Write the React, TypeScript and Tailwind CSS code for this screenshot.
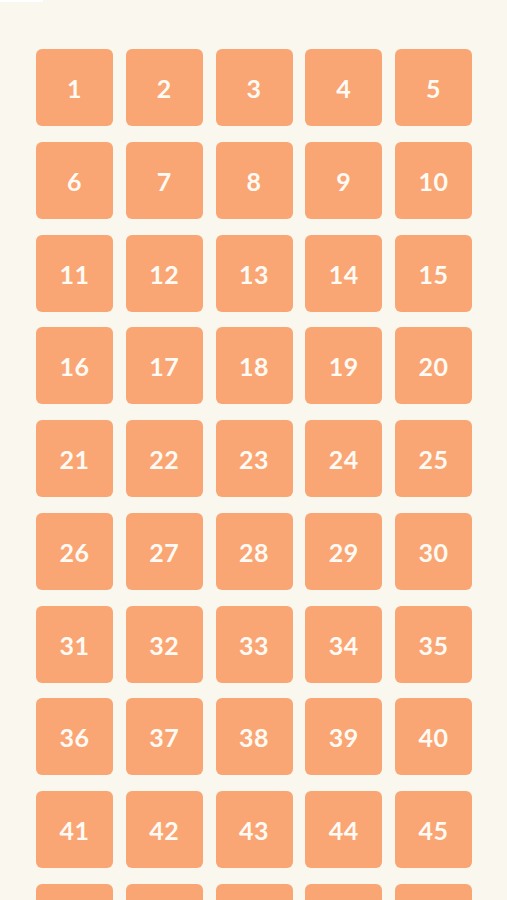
const levels = Array.from({ length: 50 }, (_, i) => i + 1);

const LevelTile = ({ n }: { n: number }) => (
  <button className="flex h-[77px] w-[77px] items-center justify-center rounded-[6px] bg-[#f9a674] pt-[2px] text-[25px] font-bold leading-none tracking-[0.5px] text-[#fffaf3]">
    {n}
  </button>
);

export default function App() {
  return (
    <div className="relative h-[900px] overflow-hidden bg-[#faf7ef] font-['Lato',sans-serif]">
      <div className="absolute left-0 top-0 h-[2px] w-[43px] bg-white" />
      <div className="grid w-fit grid-cols-[repeat(5,77px)] gap-x-[12.75px] gap-y-[15.75px] pl-[36px] pt-[49px]">
        {levels.map((n) => (
          <LevelTile key={n} n={n} />
        ))}
      </div>
    </div>
  );
}
